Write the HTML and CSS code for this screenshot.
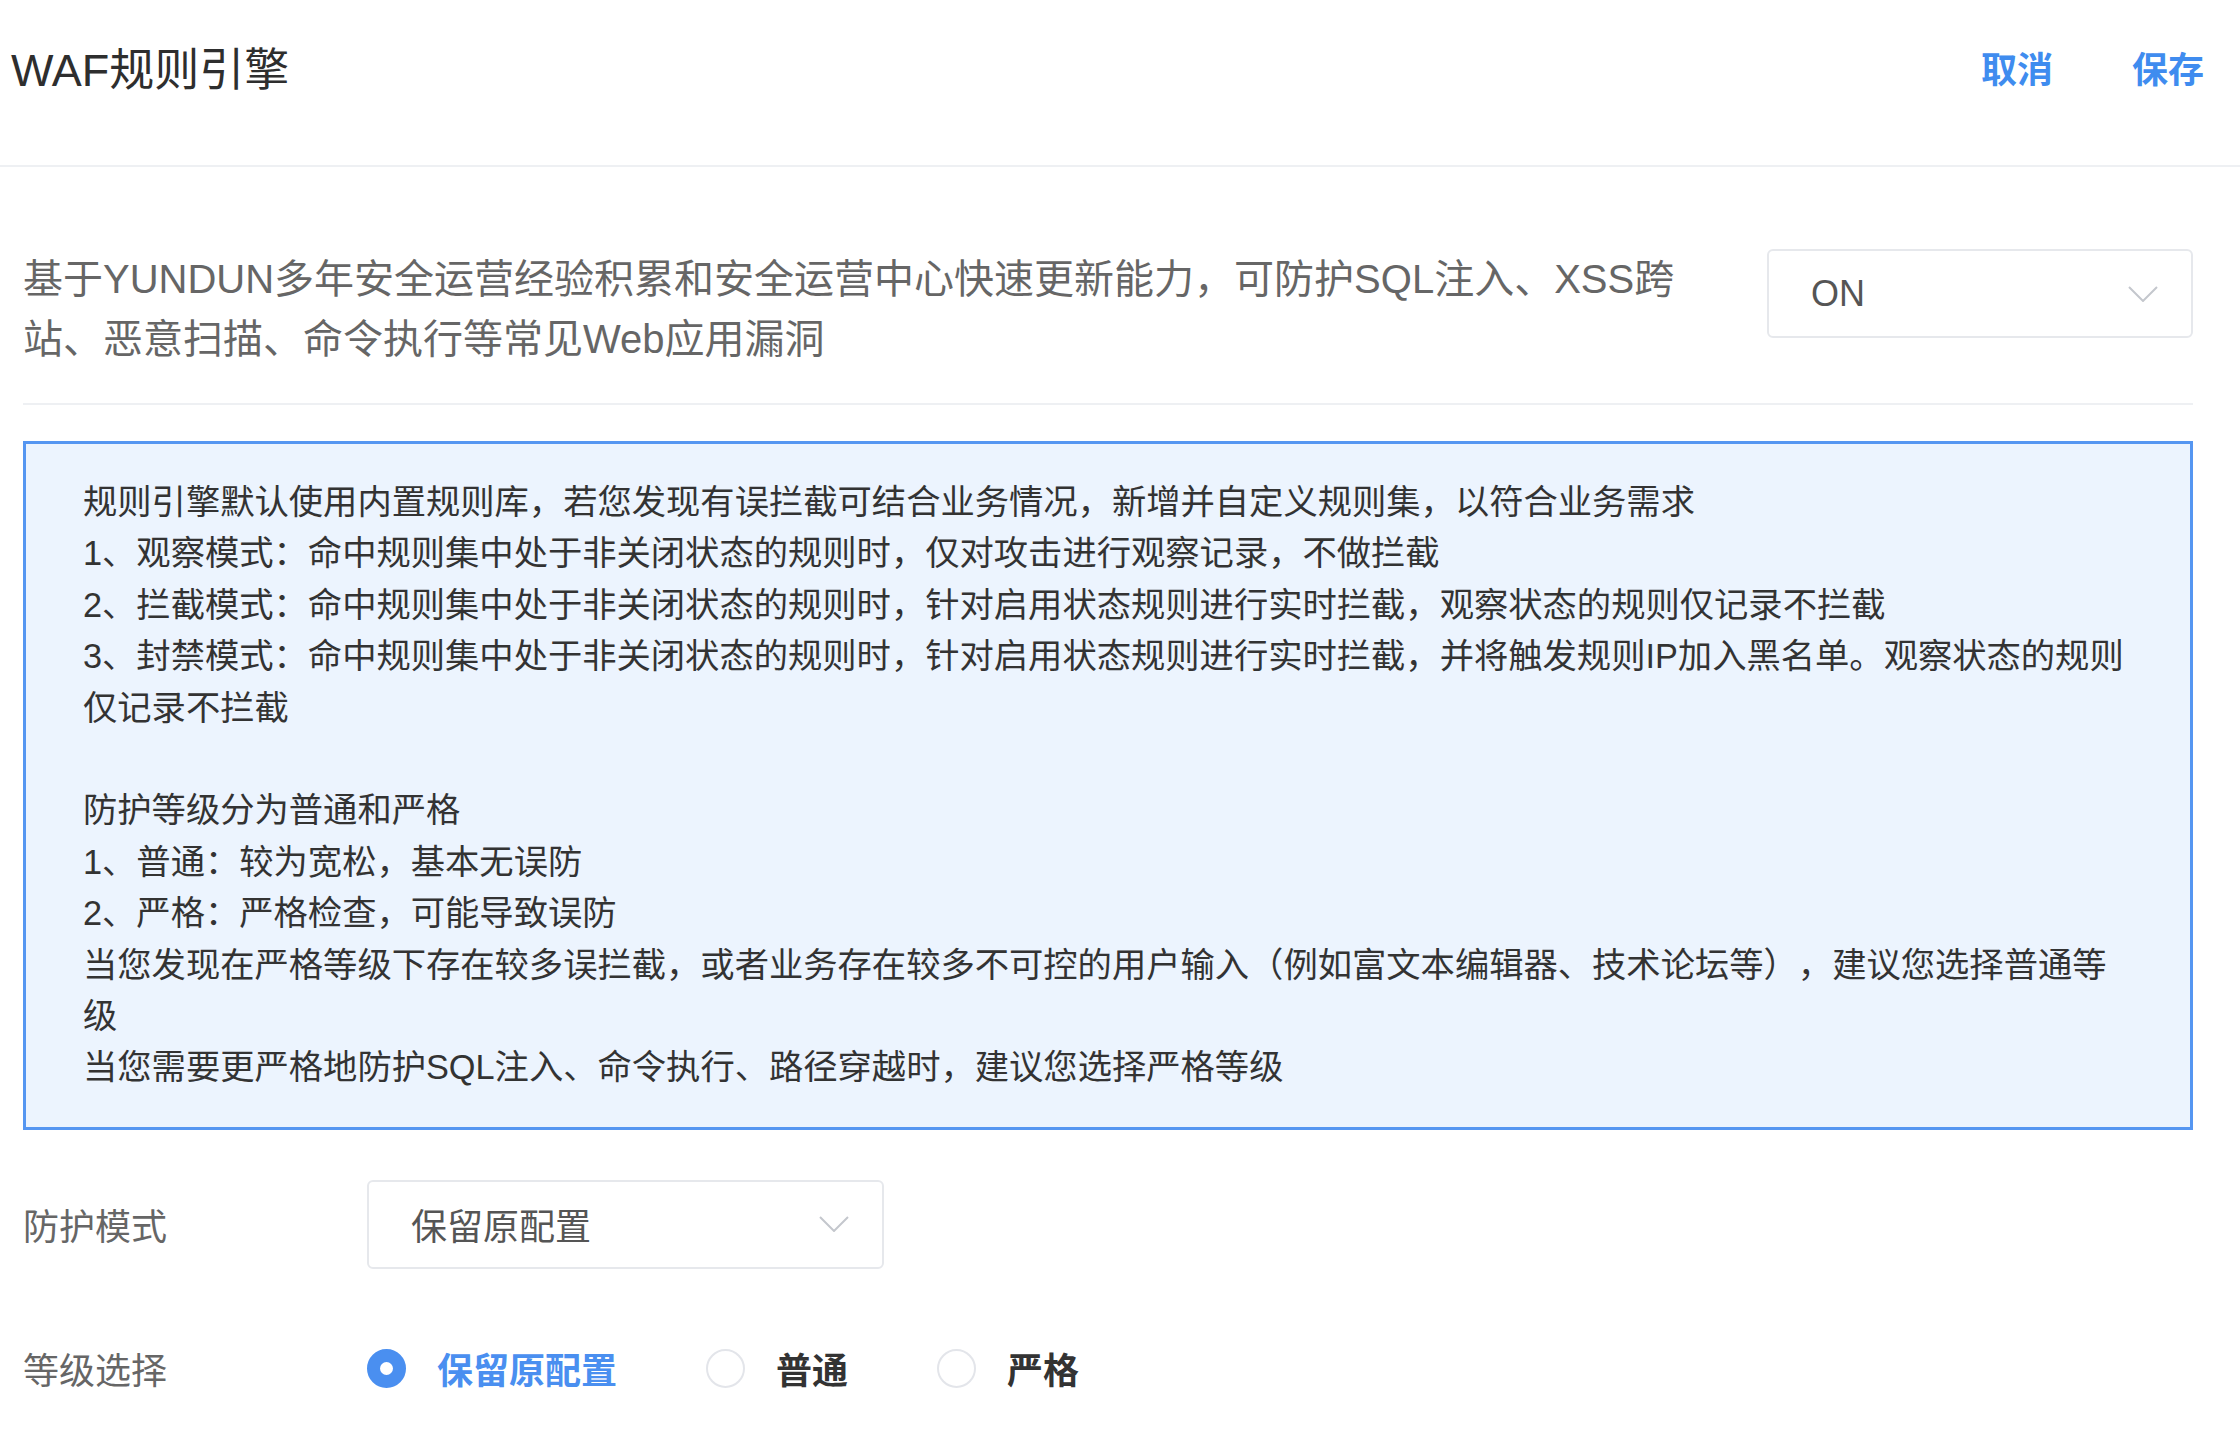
FILE: index.html
```html
<!DOCTYPE html>
<html lang="zh-CN">
<head>
<meta charset="utf-8">
<title>WAF规则引擎</title>
<link rel="stylesheet" href="styles.css">
</head>
<body>
<div class="drawer">
  <header class="head">
    <h1 class="title">WAF规则引擎</h1>
    <div class="actions">
      <a class="act">取消</a>
      <a class="act">保存</a>
    </div>
  </header>
  <main class="content">
    <section class="intro">
      <p class="intro-text">基于YUNDUN多年安全运营经验积累和安全运营中心快速更新能力，可防护SQL注入、XSS跨站、恶意扫描、命令执行等常见Web应用漏洞</p>
      <div class="select select-switch">
        <span class="select-value">ON</span>
        <svg class="chev" viewBox="0 0 30 16" width="30" height="16"><polyline points="1,1 15,15 29,1" fill="none" stroke="#c4c7cd" stroke-width="2"/></svg>
      </div>
    </section>
    <div class="notice">
      <div class="notice-group">
        <p>规则引擎默认使用内置规则库，若您发现有误拦截可结合业务情况，新增并自定义规则集，以符合业务需求</p>
        <p>1、观察模式：命中规则集中处于非关闭状态的规则时，仅对攻击进行观察记录，不做拦截</p>
        <p>2、拦截模式：命中规则集中处于非关闭状态的规则时，针对启用状态规则进行实时拦截，观察状态的规则仅记录不拦截</p>
        <p>3、封禁模式：命中规则集中处于非关闭状态的规则时，针对启用状态规则进行实时拦截，并将触发规则IP加入黑名单。观察状态的规则仅记录不拦截</p>
      </div>
      <div class="notice-group">
        <p>防护等级分为普通和严格</p>
        <p>1、普通：较为宽松，基本无误防</p>
        <p>2、严格：严格检查，可能导致误防</p>
        <p>当您发现在严格等级下存在较多误拦截，或者业务存在较多不可控的用户输入（例如富文本编辑器、技术论坛等），建议您选择普通等级</p>
        <p>当您需要更严格地防护SQL注入、命令执行、路径穿越时，建议您选择严格等级</p>
      </div>
    </div>
    <div class="form-row">
      <label class="form-label">防护模式</label>
      <div class="select select-mode">
        <span class="select-value">保留原配置</span>
        <svg class="chev" viewBox="0 0 30 16" width="30" height="16"><polyline points="1,1 15,15 29,1" fill="none" stroke="#c4c7cd" stroke-width="2"/></svg>
      </div>
    </div>
    <div class="form-row">
      <label class="form-label">等级选择</label>
      <div class="radios">
        <span class="radio is-checked"><span class="radio-dot"></span><span class="radio-text">保留原配置</span></span>
        <span class="radio"><span class="radio-dot"></span><span class="radio-text">普通</span></span>
        <span class="radio"><span class="radio-dot"></span><span class="radio-text">严格</span></span>
      </div>
    </div>
  </main>
</div>
</body>
</html>
```
FILE: styles.css
```css
* { box-sizing: border-box; }
html, body {
  margin: 0;
  padding: 0;
  background: #ffffff;
}
body {
  font-family: "Liberation Sans", "Noto Sans CJK SC", sans-serif;
  color: #333333;
  text-spacing-trim: space-all;
}
p { margin: 0; }

.drawer {
  width: 2240px;
  min-height: 1440px;
  background: #ffffff;
}

.head {
  height: 167px;
  display: flex;
  align-items: center;
  justify-content: space-between;
  padding: 0 36px 23px 11px;
  border-bottom: 2px solid #eef0f3;
}
.title {
  margin: 0;
  font-size: 45px;
  font-weight: 400;
  color: #2e2e2e;
  line-height: 60px;
}
.actions {
  display: flex;
  gap: 79px;
}
.act {
  font-size: 36px;
  font-weight: 600;
  color: #3f8cef;
  line-height: 50px;
  cursor: pointer;
}

.content {
  padding: 0 47px 0 23px;
}

.intro {
  display: flex;
  justify-content: space-between;
  align-items: flex-start;
  padding: 82px 0 34px;
  border-bottom: 2px solid #eef0f3;
}
.intro-text {
  width: 1700px;
  font-size: 40px;
  line-height: 60px;
  color: #666666;
}

.select {
  display: flex;
  align-items: center;
  justify-content: space-between;
  height: 89px;
  border: 2px solid #e6e8ec;
  border-radius: 6px;
  background: #ffffff;
  padding: 0 33px 0 42px;
}
.select-switch { width: 426px; flex-shrink: 0; }
.select-mode { width: 517px; }
.select-value {
  font-size: 36px;
  color: #555555;
}
.chev { display: block; }

.notice {
  margin-top: 36px;
  border: 3px solid #5596f1;
  background: #ecf4fe;
  padding: 33px 58px 33px 57px;
  font-size: 34.3px;
  line-height: 51.4px;
  color: #333333;
  display: flex;
  flex-direction: column;
  gap: 51.4px;
}

.form-row {
  display: flex;
  align-items: center;
  height: 89px;
  margin-top: 50px;
}
.form-row + .form-row { margin-top: 55px; }
.form-label {
  width: 344px;
  font-size: 36px;
  color: #666666;
}

.radios {
  display: flex;
  align-items: center;
  gap: 89px;
}
.radio {
  display: flex;
  align-items: center;
  gap: 31px;
}
.radio-dot {
  width: 39px;
  height: 39px;
  border-radius: 50%;
  border: 2px solid #e3e5ea;
  background: #ffffff;
  display: flex;
  align-items: center;
  justify-content: center;
}
.radio-text {
  font-size: 36px;
  font-weight: 600;
  color: #333333;
}
.radio.is-checked .radio-dot {
  border-color: #4a8ff0;
  background: #4a8ff0;
}
.radio.is-checked .radio-dot::after {
  content: "";
  width: 13px;
  height: 13px;
  border-radius: 50%;
  background: #ffffff;
}
.radio.is-checked .radio-text { color: #4a8ff0; }
```
